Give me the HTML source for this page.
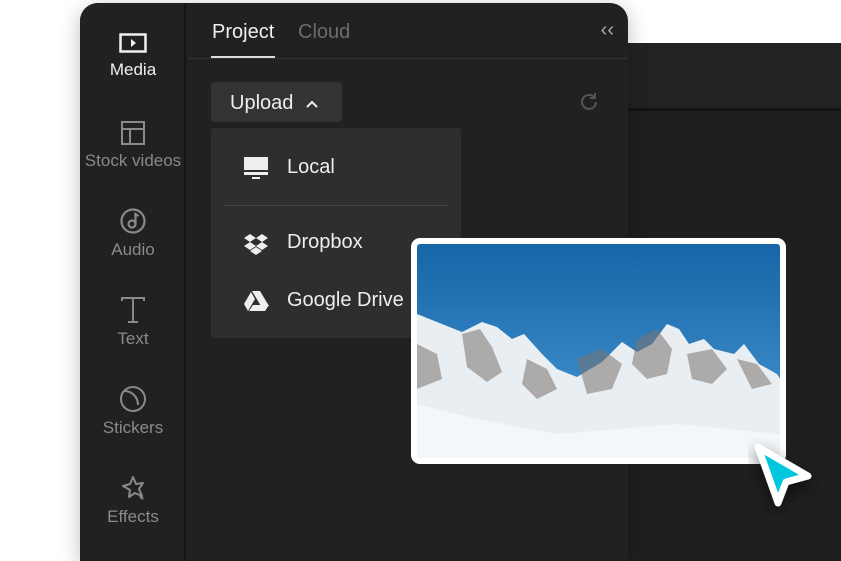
<!DOCTYPE html>
<html><head><meta charset="utf-8"><style>
*{margin:0;padding:0;box-sizing:border-box}
body{width:841px;height:561px;background:#fff;position:relative;overflow:hidden;font-family:"Liberation Sans",sans-serif}
.right{position:absolute;left:600px;top:43px;width:241px;height:518px;background:#1f1f21}
.right .bar{position:absolute;left:0;top:0;width:241px;height:68px;background:#222224;border-bottom:3px solid #131314}
.panel{position:absolute;left:80px;top:3px;width:548px;height:558px;background:#212123;border-radius:18px 18px 0 0;box-shadow:0 4px 20px rgba(0,0,0,.25);overflow:hidden}
.side{position:absolute;left:0;top:0;width:106px;height:100%;background:#212123;border-right:2px solid #151516}
.item{position:absolute;left:0;width:106px;text-align:center;color:#8a8a8c;font-size:17px}
.item svg{display:block;margin:0 auto 5px}
.tabs{position:absolute;left:108px;top:0;right:0;height:56px;border-bottom:1px solid #333335}
.tab{position:absolute;top:18px;font-size:20px}
.upload{position:absolute;left:131px;top:79px;width:131px;height:40px;background:#333336;border-radius:3px;color:#eee;font-size:20px;padding:10px 0 0 19px}
.menu{position:absolute;left:131px;top:125px;width:250px;height:210px;background:#2e2e30;border-radius:3px}
.mi{position:absolute;left:76px;color:#eee;font-size:20px}
.photo{position:absolute;left:411px;top:238px;width:375px;height:226px;background:#fff;border-radius:9px;padding:6px}
</style></head><body>
<div class="right"><div class="bar"></div></div>
<div class="panel">
 <div class="side">
  <div class="item" style="top:30px;color:#f0f0f0"><svg width="28" height="22" viewBox="0 0 28 22"><rect x="1.5" y="1.5" width="25" height="17" fill="none" stroke="#f0f0f0" stroke-width="2.5"/><path d="M12 6l5 4-5 4z" fill="#f0f0f0"/></svg>Media</div>
  <div class="item" style="top:117px"><svg width="26" height="26" viewBox="0 0 26 26"><rect x="2" y="2" width="22" height="22" fill="none" stroke="#8a8a8c" stroke-width="2"/><path d="M2 9h22M10 9v15" stroke="#8a8a8c" stroke-width="2"/></svg>Stock videos</div>
  <div class="item" style="top:204px"><svg width="28" height="28" viewBox="0 0 28 28"><circle cx="14" cy="14" r="11.5" fill="none" stroke="#8a8a8c" stroke-width="2.2"/><circle cx="13" cy="17" r="3.5" fill="none" stroke="#8a8a8c" stroke-width="2.2"/><path d="M16.5 17V7l3 2" fill="none" stroke="#8a8a8c" stroke-width="2.2"/></svg>Audio</div>
  <div class="item" style="top:293px"><svg width="26" height="28" viewBox="0 0 26 28"><path d="M2 5V2h22v3M13 2v24M8 26h10" fill="none" stroke="#8a8a8c" stroke-width="2"/></svg>Text</div>
  <div class="item" style="top:382px"><svg width="28" height="28" viewBox="0 0 28 28"><circle cx="14" cy="14" r="12" fill="none" stroke="#8a8a8c" stroke-width="2"/><path d="M5 6c8 0 14 6 14 14" fill="none" stroke="#8a8a8c" stroke-width="2"/></svg>Stickers</div>
  <div class="item" style="top:471px"><svg width="28" height="28" viewBox="0 0 28 28"><path d="M14 3l3 7 7-1-4 6 3 7-7-3-6 4 1-7-7-4 7-2z" fill="none" stroke="#8a8a8c" stroke-width="2" stroke-linejoin="round"/><path d="M21 22l3 3" stroke="#8a8a8c" stroke-width="2.5"/></svg>Effects</div>
 </div>
 <div class="tabs">
  <div class="tab" style="left:24px;color:#f0f0f0">Project</div>
  <div style="position:absolute;left:23px;top:53px;width:64px;height:2px;background:#ddd"></div>
  <div class="tab" style="left:110px;color:#6c6c6e">Cloud</div>
  <div style="position:absolute;right:14px;top:16px;color:#aaa;font-size:20px">&#x2039;&#x2039;</div>
 </div>
 <div class="upload">Upload <svg width="14" height="10" viewBox="0 0 14 10" style="margin-left:6px"><path d="M2 8l5-5 5 5" fill="none" stroke="#eee" stroke-width="2"/></svg></div>
 <svg style="position:absolute;left:498px;top:88px" width="22" height="22" viewBox="0 0 22 22"><path d="M18 11a7 7 0 1 1-2-5" fill="none" stroke="#555" stroke-width="2"/><path d="M17 2v5h-5" fill="none" stroke="#555" stroke-width="2"/></svg>
 <div class="menu">
  <svg style="position:absolute;left:33px;top:29px" width="24" height="22" viewBox="0 0 24 22"><rect x="0" y="0" width="24" height="13" fill="#eee"/><rect x="0" y="15" width="24" height="3" fill="#eee"/><rect x="8" y="20" width="8" height="2" fill="#eee"/></svg>
  <div class="mi" style="top:28px">Local</div>
  <div style="position:absolute;left:13px;top:77px;width:224px;height:1px;background:#444"></div>
  <svg style="position:absolute;left:32px;top:105px" width="26" height="22" viewBox="0 0 26 22"><path d="M7 1l6 4-6 4-6-4zM19 1l6 4-6 4-6-4zM7 9l6 4-6 4-6-4zM19 9l6 4-6 4-6-4zM13 14l6 4-6 4-6-4z" fill="#eee"/></svg>
  <div class="mi" style="top:103px">Dropbox</div>
  <svg style="position:absolute;left:32px;top:162px" width="26" height="22" viewBox="0 0 26 22"><path d="M9 1h8l9 15h-8zM8 2l4 7-7 12-4-7zM10 15h16l-4 6H6z" fill="#eee"/></svg>
  <div class="mi" style="top:161px">Google Drive</div>
 </div>
</div>
<div class="photo"><svg width="363" height="214" viewBox="0 0 363 214" style="display:block;border-radius:3px">
<defs><linearGradient id="s" x1="0" y1="0" x2="0" y2="1"><stop offset="0" stop-color="#1565a8"/><stop offset="1" stop-color="#4b9ad6"/></linearGradient></defs>
<rect width="363" height="214" fill="url(#s)"/>
<path d="M0 70l20 8 25 10 20-10 15 5 15 12 12-5 18 20 15 15 20 8 25-15 20-20 15 10 15-8 15-20 12 5 10 15 15-5 10 10 20 5 10-10 15 20 18 10 10 15V214H0z" fill="#e9eef3"/>
<g fill="#7d7470" opacity=".55">
<path d="M45 90l18-5 12 18 10 25-15 10-20-15z"/><path d="M110 115l20 10 10 20-20 10-15-15z"/><path d="M160 115l25-10 20 15-10 25-25 5z"/><path d="M220 95l20-10 15 20-5 25-20 5-15-15z"/><path d="M270 110l25-5 15 20-15 15-20-5z"/><path d="M320 115l20 5 15 20-20 5z"/><path d="M0 100l20 10 5 25-25 10z"/></g>
<path d="M0 160l60 15 80 15 120-10 103 10v34H0z" fill="#f4f7fa"/>
</svg></div>
<svg style="position:absolute;left:748px;top:438px" width="72" height="76" viewBox="0 0 72 76"><path d="M10 9l50 29-22 6-8 21z" fill="#00c7dc" stroke="#fff" stroke-width="7" stroke-linejoin="round" style="filter:drop-shadow(0 6px 8px rgba(0,0,0,.5))"/></svg>
</body></html>
